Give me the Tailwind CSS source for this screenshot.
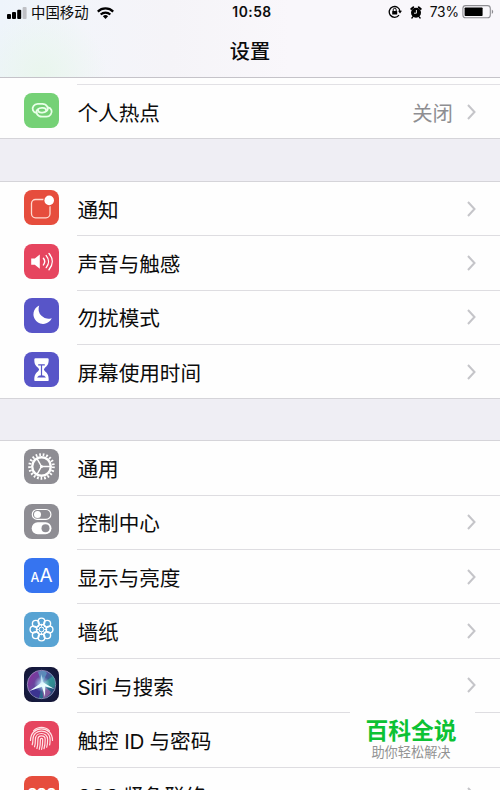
<!DOCTYPE html>
<html lang="zh-CN">
<head>
  <meta charset="UTF-8" />
  <meta name="viewport" content="width=device-width, initial-scale=1.0"/>
  <title>设置</title>
  <script src="https://cdn.jsdelivr.net/npm/@tailwindcss/browser@4"></script>
  <style>
    body {
      font-family: Inter, 'Noto Sans CJK SC', sans-serif;
    }
    .header-tint {
      background:
        radial-gradient(circle at 42px 75px, #e9f6ed 0, rgba(233, 246, 237, 0) 65px),
        linear-gradient(90deg, #eef4fb 0, #f3f5fa 80px, #f5f4f8 170px, #f9f7fb 290px);
    }
    .siri {
      background: radial-gradient(circle at 50% 50%, #24405f 0, #151c42 60%, #14122f 100%);
    }
  </style>
</head>
<body class="h-[790px] w-[500px] overflow-hidden bg-[#efeef4] text-[#0c0c0c]">
  <!-- status bar + title -->
  <header class="header-tint h-[78px] border-b border-[#c5c3c9]">
    <div class="grid h-[25px] grid-cols-[1fr_auto_1fr] items-center pl-[7px] pr-[5px]">
      <div class="flex items-center">
        <svg class="mr-[4px] h-[12px] w-[20px]" viewBox="0 0 20 12">
          <rect x="0" y="7" width="4" height="5" rx="1"/>
          <rect x="5" y="5" width="4" height="7" rx="1"/>
          <rect x="10.2" y="2.7" width="4" height="9.3" rx="1"/>
          <rect x="15.6" y="0" width="4" height="12" rx="1" fill="#bfc0c5"/>
        </svg>
        <span class="pt-[2px] text-[14.4px] leading-none whitespace-nowrap">中国移动</span>
        <svg class="ml-[8px] h-[12px] w-[17px]" viewBox="0 0 17 12" fill="none" stroke="#000" stroke-width="2.2">
          <path d="M.8 4.6a11 11 0 0 1 15.4 0"/>
          <path d="M3.7 7.5a6.9 6.9 0 0 1 9.6 0"/>
          <path d="M8.5 12 5.9 9.3a3.7 3.7 0 0 1 5.2 0z" fill="#000" stroke="none"/>
        </svg>
      </div>
      <span class="pl-[2px] pt-[1px] text-[13.8px] font-semibold leading-none tracking-[0.5px]">10:58</span>
      <div class="flex items-center justify-end">
        <svg class="mr-[8px] h-[14px] w-[14px]" viewBox="0 0 14 14" fill="none" stroke="#000" stroke-width="1.3">
          <path d="M11 10.1A5.4 5.4 0 1 1 12 6.4"/>
          <path d="M10 5.8h4L12 8.6z" fill="#000" stroke="none"/>
          <rect x="4.2" y="5.9" width="5" height="3.7" rx=".5" fill="#000" stroke="none"/>
          <path d="M5.2 6.1V4.8a1.5 1.5 0 0 1 3 0v1.3" stroke-width="1"/>
        </svg>
        <svg class="mr-[8px] h-[13px] w-[12px]" viewBox="0 0 12 13">
          <circle cx="6" cy="6.8" r="5"/>
          <path d="M1.2 3 3.3 1.200M10.800 3 8.700 1.200" stroke="#000" stroke-width="1.800" stroke-linecap="round"/>
          <path d="m2.7 11-.8 1m7.400-1 .8 1" stroke="#000" stroke-width="1.3" stroke-linecap="round"/>
          <path d="M6.4 4v3.200H4" fill="none" stroke="#fff" stroke-width=".9"/>
        </svg>
        <span class="mr-[3px] pt-[1px] text-[13.8px] leading-none tracking-[-0.1px]">73%</span>
        <svg class="h-[14px] w-[33px]" viewBox="0 0 33 14">
          <rect x=".9" y=".6" width="27.4" height="12.2" rx="2.8" fill="none" stroke="#8e8d92" stroke-width="1.1"/>
          <rect x="2.6" y="2.4" width="18" height="8.7" rx=".8"/>
          <path d="M29.8 4.5c1.9.8 1.9 3.7 0 4.500z" fill="#8e8d92"/>
        </svg>
      </div>
    </div>
    <h1 class="pt-[12px] text-center text-[20.2px] font-medium leading-[30px]">设置</h1>
  </header>

  <section class="border-b border-[#d5d4d9] bg-[#fefefe]">
    <div class="ml-[77px] h-[7px] border-b border-[#e2e1e5]"></div>
    <div class="flex h-[53px] items-center pl-[24px]">
      <svg class="mb-[2px] mr-[18px] h-[35px] w-[35px] shrink-0 rounded-[8px] bg-[#75d176]" viewBox="0 0 35 35" fill="none" stroke="#e9ffe8" stroke-width="1.800" stroke-linecap="round">
        <path d="M12.600 19.900c-3.500-.4-5.100-4.200-3.100-6.900 1-1.500 2.400-2.200 4.200-2.200h4.600c4.500 0 7.200 4.600 4.200 7.400-1 .9-2.300 1.400-4.100 1.400h-1c-2.400 0-3.700-1.300-3.200-2.800"/>
        <path d="M24 14.300c3.500.6 4.800 4.500 2.700 7.200-1.100 1.400-2.400 2.200-4.200 2.200h-4.600c-4.500 0-7.200-4.600-4.200-7.400 1-.9 2.300-1.400 4.100-1.400h1c2.400 0 3.700 1.300 3.200 2.800"/>
      </svg>
      <span class="flex-1 pl-[0.5px] pt-[5px] text-[20.6px]">个人热点</span>
      <span class="mr-[14px] pt-[5px] text-[20.4px] text-[#8e8e92]">关闭</span>
      <svg class="mr-[24px] h-[16px] w-[9px]" viewBox="0 0 9 16" fill="none" stroke="#c5c5c9" stroke-width="2"><path d="m1 1 6.500 7L1 15"/></svg>
    </div>
  </section>

  <section class="mt-[42px] border-t border-[#d5d4d9] bg-[#fefefe]">
    <div class="flex h-[54.3px] pl-[24px]">
      <svg class="mr-[18px] mt-[7.500px] h-[35px] w-[35px] shrink-0 rounded-[8px] bg-[#e64d3d]" viewBox="0 0 35 35">
        <rect x="7.5" y="9.5" width="18.5" height="18.3" rx="4" fill="none" stroke="#ffd9cf" stroke-width="1.3"/>
        <circle cx="25.2" cy="10.4" r="6" fill="#e64d3d"/>
        <circle cx="25.2" cy="10.4" r="4.8" fill="#fff"/>
      </svg>
      <div class="flex flex-1 items-center border-b border-[#dedde1] pr-[24px]">
        <span class="flex-1 pl-[0.5px] pt-[5px] text-[20.6px]">通知</span>
        <svg class="h-[16px] w-[9px]" viewBox="0 0 9 16" fill="none" stroke="#c5c5c9" stroke-width="2"><path d="m1 1 6.500 7L1 15"/></svg>
      </div>
    </div>
    <div class="flex h-[54.3px] pl-[24px]">
      <svg class="mr-[18px] mt-[7.500px] h-[35px] w-[35px] shrink-0 rounded-[8px] bg-[#e6455f]" viewBox="0 0 35 35" fill="none" stroke="#fff" stroke-width="1.4" stroke-linecap="round">
        <path d="M7.2 14.5h3.6l5-4v14.3l-5-4.1H7.2z" fill="#fff" stroke="none"/>
        <path d="M19.4 14.3c1.6 2 1.6 4.6 0 6.6"/>
        <path d="M22.2 11.6c3 3.6 3 8.4 0 12"/>
        <path d="M25 9.5c4.3 5 4.3 11.2 0 16.2"/>
      </svg>
      <div class="flex flex-1 items-center border-b border-[#dedde1] pr-[24px]">
        <span class="flex-1 pl-[0.5px] pt-[5px] text-[20.6px]">声音与触感</span>
        <svg class="h-[16px] w-[9px]" viewBox="0 0 9 16" fill="none" stroke="#c5c5c9" stroke-width="2"><path d="m1 1 6.500 7L1 15"/></svg>
      </div>
    </div>
    <div class="flex h-[54.3px] pl-[24px]">
      <svg class="mr-[18px] mt-[7.500px] h-[35px] w-[35px] shrink-0 rounded-[8px] bg-[#5855c8]" viewBox="0 0 35 35">
        <path d="M15.200 7.500A9.600 9.600 0 1 0 27.800 20.200 9.900 9.900 0 0 1 15.200 7.500z" fill="#fff"/>
      </svg>
      <div class="flex flex-1 items-center border-b border-[#dedde1] pr-[24px]">
        <span class="flex-1 pl-[0.5px] pt-[5px] text-[20.6px]">勿扰模式</span>
        <svg class="h-[16px] w-[9px]" viewBox="0 0 9 16" fill="none" stroke="#c5c5c9" stroke-width="2"><path d="m1 1 6.500 7L1 15"/></svg>
      </div>
    </div>
    <div class="flex h-[54.3px] border-b border-[#d5d4d9] pl-[24px]">
      <svg class="mr-[18px] mt-[7.500px] h-[35px] w-[35px] shrink-0 rounded-[8px] bg-[#5855c8]" viewBox="0 0 35 35">
        <path d="M11.500 6.200h12q1.200 0 1.200 1.300c0 4.500-1 6-4 8.400q-1.700 1.600 0 3.200c3 2.400 4 4.500 4 8.800q0 1.200-1.200 1.200h-12q-1.200 0-1.200-1.200c0-4.300 1-6.400 4-8.800q1.700-1.600 0-3.200c-3-2.400-4-3.900-4-8.400q0-1.300 1.200-1.300z" fill="#fff"/>
        <path d="M14.200 12.800h6.600M17.500 13v11" stroke="#5855c8" stroke-width="1.200"/>
        <path d="M13 25.500q1.200-2.300 4.500-2.300t4.500 2.300z" fill="#5855c8"/>
      </svg>
      <div class="flex flex-1 items-center pr-[24px]">
        <span class="flex-1 pl-[0.5px] pt-[5px] text-[20.6px]">屏幕使用时间</span>
        <svg class="h-[16px] w-[9px]" viewBox="0 0 9 16" fill="none" stroke="#c5c5c9" stroke-width="2"><path d="m1 1 6.500 7L1 15"/></svg>
      </div>
    </div>
  </section>

  <section class="relative mt-[41px] border-t border-[#d5d4d9] bg-[#fefefe]">
    <div class="flex h-[54.4px] pl-[24px]">
      <svg class="mr-[18px] mt-[8px] h-[35px] w-[35px] shrink-0 rounded-[8px] bg-[#8e8d93]" viewBox="0 0 35 35" fill="none" stroke="#fff">
        <circle cx="17.5" cy="17.5" r="11.900" stroke-width="2.800" stroke-dasharray="1.700 1.860"/>
        <circle cx="17.5" cy="17.5" r="9.3" stroke-width="2.400"/>
        <path d="M17.5 17.5h9M17.5 17.5 13 9.700M17.5 17.5 13 25.3" stroke-width="1.500"/>
        <circle cx="17.5" cy="17.5" r="1.5" fill="#fff" stroke="none"/>
      </svg>
      <div class="flex flex-1 items-center border-b border-[#dedde1] pr-[24px]">
        <span class="flex-1 pl-[0.5px] pt-[5px] text-[20.6px]">通用</span>
      </div>
    </div>
    <div class="flex h-[54.4px] pl-[24px]">
      <svg class="mr-[18px] mt-[8px] h-[35px] w-[35px] shrink-0 rounded-[8px] bg-[#8e8d93]" viewBox="0 0 35 35">
        <rect x="8.3" y="5.5" width="18.6" height="9.8" rx="4.9" fill="none" stroke="#fff" stroke-width="1.2"/>
        <circle cx="13.5" cy="10.4" r="3.5" fill="#fff"/>
        <rect x="7.7" y="18.3" width="19.800" height="12" rx="6" fill="#fff"/>
        <circle cx="21.5" cy="24.3" r="4" fill="#8e8d93"/>
      </svg>
      <div class="flex flex-1 items-center border-b border-[#dedde1] pr-[24px]">
        <span class="flex-1 pl-[0.5px] pt-[5px] text-[20.6px]">控制中心</span>
        <svg class="h-[16px] w-[9px]" viewBox="0 0 9 16" fill="none" stroke="#c5c5c9" stroke-width="2"><path d="m1 1 6.500 7L1 15"/></svg>
      </div>
    </div>
    <div class="flex h-[54.4px] pl-[24px]">
      <div class="mr-[18px] mt-[8px] flex h-[35px] w-[35px] shrink-0 items-baseline justify-center rounded-[8px] bg-[#3674f0] leading-[35px] text-white">
        <span class="text-[12.5px] font-medium">A</span><span class="text-[19px]">A</span>
      </div>
      <div class="flex flex-1 items-center border-b border-[#dedde1] pr-[24px]">
        <span class="flex-1 pl-[0.5px] pt-[5px] text-[20.6px]">显示与亮度</span>
        <svg class="h-[16px] w-[9px]" viewBox="0 0 9 16" fill="none" stroke="#c5c5c9" stroke-width="2"><path d="m1 1 6.500 7L1 15"/></svg>
      </div>
    </div>
    <div class="flex h-[54.4px] pl-[24px]">
      <svg class="mr-[18px] mt-[8px] h-[35px] w-[35px] shrink-0 rounded-[8px] bg-[#58a3d3]" viewBox="0 0 35 35" fill="none" stroke="#fff" stroke-width="1.400">
        <circle cx="17.5" cy="9.500" r="3.400"/>
        <circle cx="23.200" cy="11.800" r="3.400"/>
        <circle cx="25.500" cy="17.5" r="3.400"/>
        <circle cx="23.200" cy="23.200" r="3.400"/>
        <circle cx="17.5" cy="25.500" r="3.400"/>
        <circle cx="11.800" cy="23.200" r="3.400"/>
        <circle cx="9.500" cy="17.5" r="3.400"/>
        <circle cx="11.800" cy="11.800" r="3.400"/>
        <circle cx="17.5" cy="17.5" r="5.200" stroke-width="1.200"/>
        <path d="M17.5 12.300v2.400m0 5.600v2.400m-5.200-5.200h2.400m5.600 0h2.400m-8.900-3.700 1.700 1.700m4 4 1.700 1.700m0-7.400-1.700 1.700m-4 4-1.700 1.700" stroke-width="1"/>
        <circle cx="17.5" cy="17.5" r="2.300" stroke-width="1"/>
      </svg>
      <div class="flex flex-1 items-center border-b border-[#dedde1] pr-[24px]">
        <span class="flex-1 pl-[0.5px] pt-[5px] text-[20.6px]">墙纸</span>
        <svg class="h-[16px] w-[9px]" viewBox="0 0 9 16" fill="none" stroke="#c5c5c9" stroke-width="2"><path d="m1 1 6.500 7L1 15"/></svg>
      </div>
    </div>
    <div class="flex h-[54.4px] pl-[24px]">
      <svg class="siri mr-[18px] mt-[8px] h-[35px] w-[35px] shrink-0 rounded-[8px]" viewBox="0 0 35 35">
        <defs>
          <linearGradient id="orb" x1="0" y1="0.2" x2="1" y2="0.8">
            <stop offset="0" stop-color="#8b2e9c"/>
            <stop offset=".45" stop-color="#59509f"/>
            <stop offset=".7" stop-color="#256f8c"/>
            <stop offset="1" stop-color="#29356d"/>
          </linearGradient>
          <radialGradient id="glow">
            <stop offset="0" stop-color="#fff"/>
            <stop offset=".35" stop-color="#bdeeff" stop-opacity=".6"/>
            <stop offset="1" stop-color="#bdeeff" stop-opacity="0"/>
          </radialGradient>
        </defs>
        <circle cx="17.5" cy="17.5" r="14.2" fill="url(#orb)" stroke="#9c9bc0" stroke-width=".8"/>
        <path d="M18 17 6 24Q7 29 15 31z" fill="#3b3490"/>
        <path d="M18 17 14 5q6-3 9 1z" fill="#56b4cb" opacity=".6"/>
        <path d="M18 17 29 9q4 7 1 12z" fill="#3ba79b" opacity=".6"/>
        <path d="M18 17 19 31q6-1 8-6z" fill="#c057ae" opacity=".6"/>
        <circle cx="18" cy="17" r="8" fill="url(#glow)"/>
        <path d="M18.500 15 5.500 24l12.500-4.200L21 30l.2-10.500L30.500 22z" fill="#e9fdff"/>
        <path d="m16.500 18 .8-11 2.500 10z" fill="#d9f4ff" opacity=".7"/>
      </svg>
      <div class="flex flex-1 items-center border-b border-[#dedde1] pr-[24px]">
        <span class="flex-1 pl-[0.5px] pt-[5px] text-[20.6px]"><span class="tracking-[-0.5px]">Siri </span>与搜索</span>
        <svg class="h-[16px] w-[9px]" viewBox="0 0 9 16" fill="none" stroke="#c5c5c9" stroke-width="2"><path d="m1 1 6.500 7L1 15"/></svg>
      </div>
    </div>
    <div class="flex h-[54.4px] pl-[24px]">
      <svg class="mr-[18px] mt-[8px] h-[35px] w-[35px] shrink-0 rounded-[8px] bg-[#e6455f]" viewBox="0 0 35 35" fill="none" stroke="#ffe3e6" stroke-width="1.2" stroke-linecap="round">
        <path d="M9.5 9.8c4.5-4.5 11.5-4.5 16 0"/>
        <path d="M6.5 19.5c0-15.5 22-15.5 22 0"/>
        <path d="M8.2 23.8c.7-2 .7-3.5.7-5.3 0-11.3 17.2-11.3 17.2 0 0 2.2 0 3.5-.5 5.5"/>
        <path d="M10.5 25.8c.9-2.5.9-5 .9-7.3 0-8 12.2-8 12.2 0 0 3 0 5-.9 7.8"/>
        <path d="M12.9 27.5c1-3 1-6 1-9 0-4.8 7.3-4.8 7.3 0 0 3.5-.2 6-1.2 9.2"/>
        <path d="M15.3 28.3c1-3.3 1.1-6.6 1.1-9.8 0-1.5 2.3-1.5 2.3 0 0 3.5-.2 6.7-1.1 9.8"/>
      </svg>
      <div class="flex flex-1 items-center border-b border-[#dedde1] pr-[24px]">
        <span class="flex-1 pl-[0.5px] pt-[5px] text-[20.6px]">触控<span class="tracking-[-0.3px]"> ID </span>与密码</span>
      </div>
    </div>
    <div class="flex h-[54.4px] pl-[24px]">
      <div class="mr-[18px] mt-[8px] h-[35px] w-[35px] shrink-0 rounded-[8px] bg-[#e64d3d] text-center text-[14px] font-bold leading-[36px] tracking-[-0.5px] text-white">SOS</div>
      <div class="flex flex-1 items-center pr-[24px]">
        <span class="flex-1 pl-[0.5px] pt-[5px] text-[20.6px]"><span class="tracking-[-0.5px]">SOS </span>紧急联络</span>
        <svg class="h-[16px] w-[9px]" viewBox="0 0 9 16" fill="none" stroke="#c5c5c9" stroke-width="2"><path d="m1 1 6.500 7L1 15"/></svg>
      </div>
    </div>

    <!-- watermark, lies over the last rows -->
    <div class="absolute left-[350px] top-[264px] h-[58px] w-[125px] bg-[#fefefe] pr-[3px] text-center">
      <div class="pt-[12px] text-[22.8px] font-bold leading-[28px] text-[#0cc234]">百科全说</div>
      <div class="text-[13.2px] leading-[15px] text-[#929292]">助你轻松解决</div>
    </div>
  </section>
</body>
</html>
